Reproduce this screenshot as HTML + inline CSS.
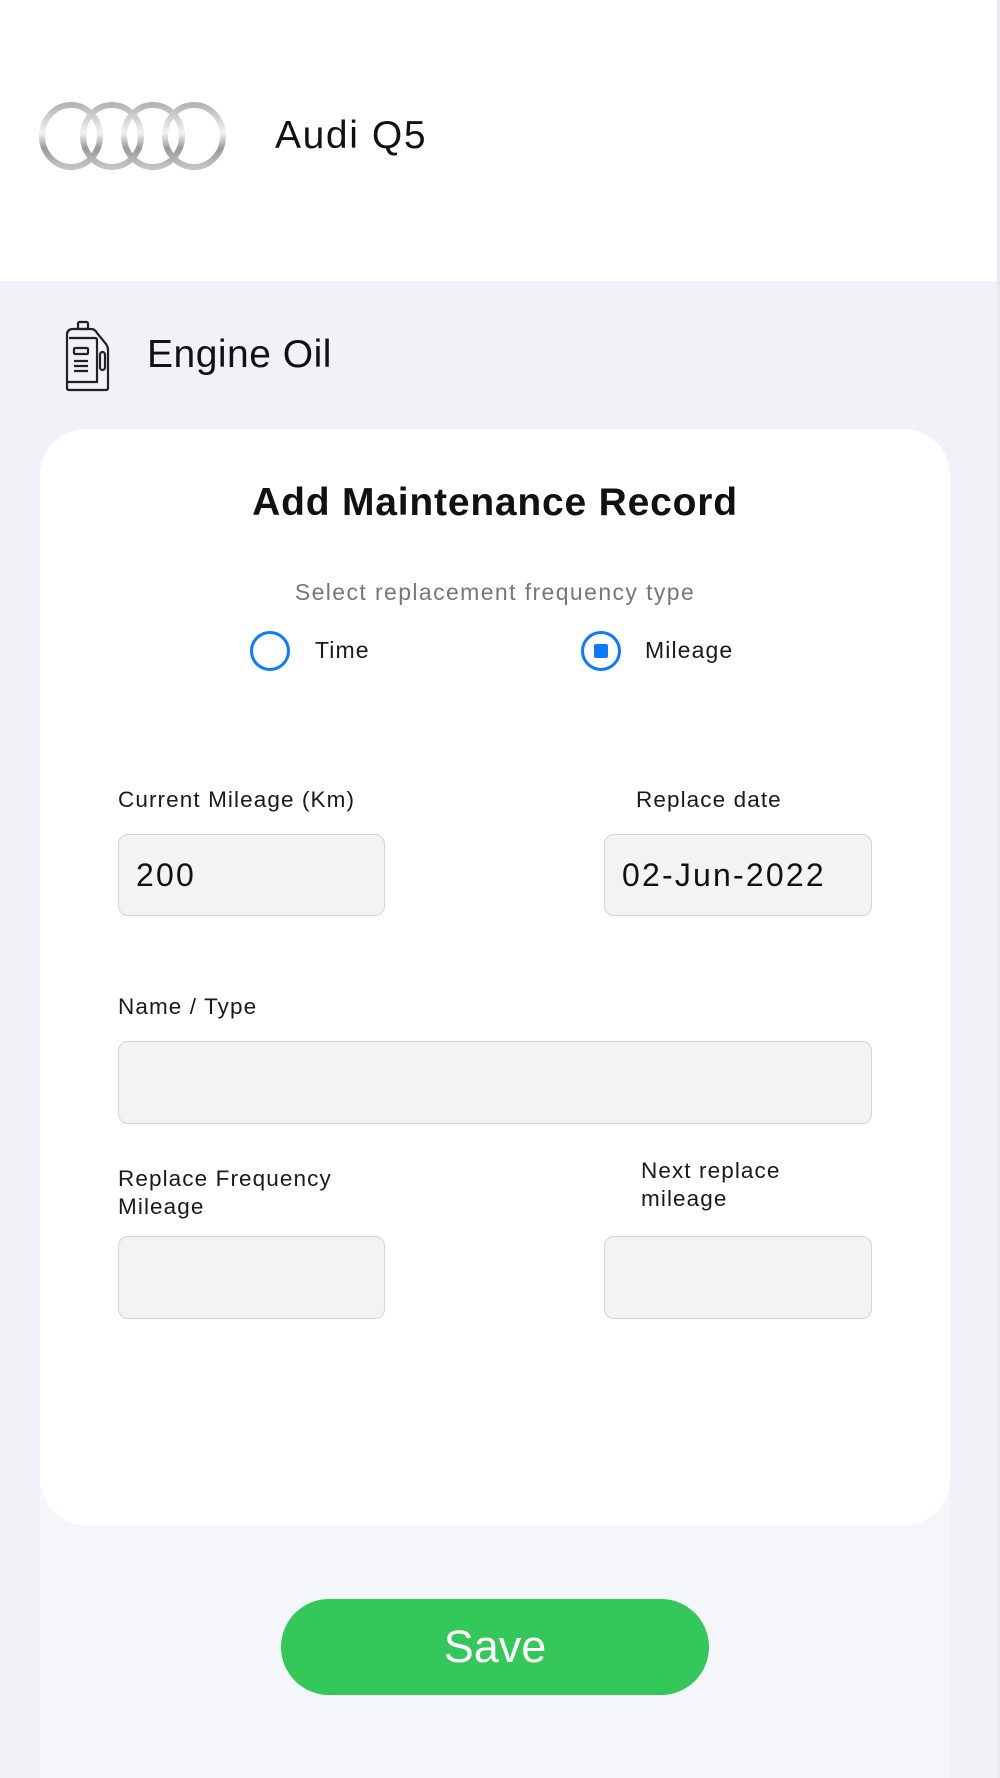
<!DOCTYPE html>
<html><head><meta charset="utf-8"><style>
*{margin:0;padding:0;box-sizing:border-box}
body{width:1000px;height:1778px;background:#f1f2f7;font-family:"Liberation Sans",sans-serif;position:relative;overflow:hidden;color:#111}
.abs{position:absolute}
.hdr{left:0;top:0;width:998px;height:281px;background:#fff}
.rline{left:997px;top:0;width:3px;height:1778px;background:#e8e9ee}
.panel{left:40px;top:1480px;width:910px;height:298px;background:#f4f6fa}
.card{left:40px;top:429px;width:910px;height:1096px;background:#fff;border-radius:46px}
.lbl{font-size:22.5px;color:#1a1a1a;line-height:28px;letter-spacing:1.1px}
.inp{background:#f3f3f5;border:1.5px solid #d4d4d8;border-radius:10px}
.val{font-size:32px;color:#111;letter-spacing:2.2px}
</style></head><body>
<div class="abs hdr"></div>
<div class="abs rline"></div>
<svg class="abs" style="left:36px;top:98px" width="196" height="76" viewBox="0 0 196 76">
<defs><linearGradient id="g" x1="0" y1="0" x2="0" y2="1"><stop offset="0" stop-color="#b5b5b5"/><stop offset="0.45" stop-color="#f2f2f2"/><stop offset="0.7" stop-color="#999"/><stop offset="1" stop-color="#c4c4c4"/></linearGradient></defs>
<g fill="none" stroke="url(#g)" stroke-width="6">
<ellipse cx="35" cy="38" rx="29" ry="31"/><ellipse cx="76" cy="38" rx="29" ry="31"/><ellipse cx="117" cy="38" rx="29" ry="31"/><ellipse cx="158" cy="38" rx="29" ry="31"/></g></svg>
<div class="abs" style="left:275px;top:114px;font-size:39px;letter-spacing:1.6px">Audi Q5</div>
<svg class="abs" style="left:64px;top:320px" width="50" height="72" viewBox="0 0 50 72" fill="none" stroke="#222" stroke-width="2.2">
<rect x="14" y="2" width="10" height="7" rx="1.5"/>
<path d="M3 68 V15 q0-6 6-6 h18 q4 0 6 4 l9 11 q2 3 2 6 V68 q0 2-2 2 H5 q-2 0-2-2z"/>
<path d="M3 62 h30 V20 q0-2-2-2 H5"/>
<rect x="36" y="32" width="5" height="18" rx="2.5"/>
<rect x="10" y="28" width="14" height="6" rx="1"/>
<path d="M10 41 h14 M10 46 h14 M10 51 h14"/></svg>
<div class="abs" style="left:147px;top:333px;font-size:39px;letter-spacing:0.5px">Engine Oil</div>
<div class="abs panel"></div>
<div class="abs card"></div>
<div class="abs" style="left:40px;width:910px;top:481px;text-align:center;font-size:39px;font-weight:bold;letter-spacing:0.8px">Add Maintenance Record</div>
<div class="abs" style="left:40px;width:910px;top:579px;text-align:center;font-size:23px;color:#777;letter-spacing:1.4px">Select replacement frequency type</div>
<div class="abs" style="left:250px;top:631px;width:40px;height:40px;border:3px solid #0a7bff;border-radius:50%"></div>
<div class="abs lbl" style="left:315px;top:636px;font-size:23px">Time</div>
<div class="abs" style="left:581px;top:631px;width:40px;height:40px;border:3px solid #0a7bff;border-radius:50%"></div>
<div class="abs" style="left:594px;top:644px;width:14px;height:14px;background:#0a7bff;border-radius:2px"></div>
<div class="abs lbl" style="left:645px;top:636px;font-size:23px">Mileage</div>
<div class="abs lbl" style="left:118px;top:786px">Current Mileage (Km)</div>
<div class="abs lbl" style="left:636px;top:786px">Replace date</div>
<div class="abs inp" style="left:118px;top:834px;width:267px;height:82px"></div>
<div class="abs val" style="left:136px;top:857px">200</div>
<div class="abs inp" style="left:604px;top:834px;width:268px;height:82px"></div>
<div class="abs val" style="left:622px;top:857px">02-Jun-2022</div>
<div class="abs lbl" style="left:118px;top:993px">Name / Type</div>
<div class="abs inp" style="left:118px;top:1041px;width:754px;height:83px"></div>
<div class="abs lbl" style="left:118px;top:1165px">Replace Frequency<br>Mileage</div>
<div class="abs lbl" style="left:641px;top:1157px">Next replace<br>mileage</div>
<div class="abs inp" style="left:118px;top:1236px;width:267px;height:83px"></div>
<div class="abs inp" style="left:604px;top:1236px;width:268px;height:83px"></div>
<div class="abs" style="left:281px;top:1599px;width:428px;height:96px;background:#34c759;border-radius:48px;color:#fff;font-size:45px;text-align:center;line-height:96px">Save</div>
</body></html>
